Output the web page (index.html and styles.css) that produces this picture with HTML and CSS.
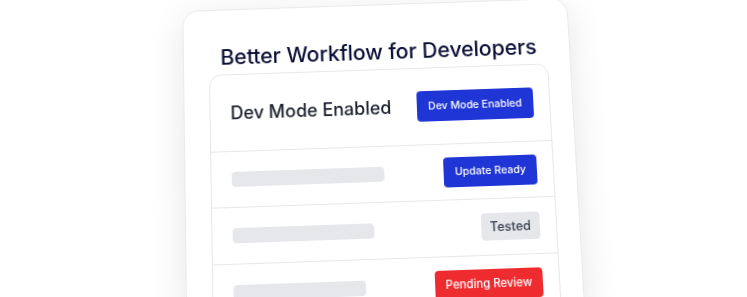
FILE: index.html
```html
<!DOCTYPE html>
<html lang="en">
<head>
<meta charset="utf-8">
<title>Better Workflow for Developers</title>
<link rel="stylesheet" href="styles.css">
</head>
<body>
<div class="stage">
  <div class="card">
    <h1 class="title">Better Workflow for Developers</h1>
    <div class="list">
      <div class="row row-head">
        <span class="label">Dev Mode Enabled</span>
        <span class="badge badge-blue">Dev Mode Enabled</span>
      </div>
      <div class="row">
        <span class="bar bar-1"></span>
        <span class="badge badge-blue">Update Ready</span>
      </div>
      <div class="row">
        <span class="bar bar-2"></span>
        <span class="badge badge-gray">Tested</span>
      </div>
      <div class="row">
        <span class="bar bar-3"></span>
        <span class="badge badge-red">Pending Review</span>
      </div>
    </div>
  </div>
</div>
</body>
</html>
```

FILE: styles.css
```css
html, body {
  margin: 0;
  padding: 0;
  background: #ffffff;
}

body {
  font-family: Inter, "Noto Sans", sans-serif;
  width: 747px;
  height: 297px;
  overflow: hidden;
}

.stage {
  display: flex;
  justify-content: center;
  padding-left: 11px;
}

.card {
  width: 391px;
  margin-top: 1px;
  box-sizing: border-box;
  background: #ffffff;
  border: 1px solid #e8eaee;
  border-radius: 16px;
  padding: 32px 22px 22px 25px;
  box-shadow: 0 8px 36px rgba(15, 23, 42, 0.1);
  transform: perspective(1200px) rotateX(8deg) rotateZ(-2deg);
  transform-origin: 50% 40%;
}

.title {
  margin: 0 0 2px 1px;
  text-align: center;
  white-space: nowrap;
  font-size: 21.5px;
  line-height: 32px;
  font-weight: 500;
  color: #0b1036;
  letter-spacing: -0.1px;
}

.list {
  border: 1px solid #e5e7eb;
  border-radius: 12px;
  background: #ffffff;
}

.row {
  display: flex;
  align-items: center;
  justify-content: space-between;
  height: 55px;
  padding: 0 16px 0 20px;
  border-top: 1px solid #e5e7eb;
}

.row:first-child {
  border-top: none;
}

.row-head {
  height: 77px;
}

.label {
  font-size: 18px;
  line-height: 28px;
  font-weight: 500;
  color: #1a1f2c;
}

.badge {
  display: inline-block;
  border-radius: 4px;
  font-size: 10.5px;
  line-height: 15px;
  padding: 7.5px 11px;
  font-weight: 500;
}

.badge-blue {
  background: #1f35d6;
  color: #ffffff;
}

.row-head .badge-blue {
  padding: 8px 11.5px;
}

.badge-gray {
  background: #e5e7eb;
  color: #374151;
  font-size: 12.5px;
  line-height: 17px;
  padding: 5px 9px;
}

.badge-red {
  background: #ee2b2f;
  color: #ffffff;
  font-size: 11.2px;
  line-height: 15px;
  padding: 7px 10.5px;
}

.bar {
  display: block;
  height: 15px;
  border-radius: 4px;
  background: #e5e7eb;
}

.bar-1 { width: 152px; }
.bar-2 { width: 140px; }
.bar-3 { width: 130px; }
```
